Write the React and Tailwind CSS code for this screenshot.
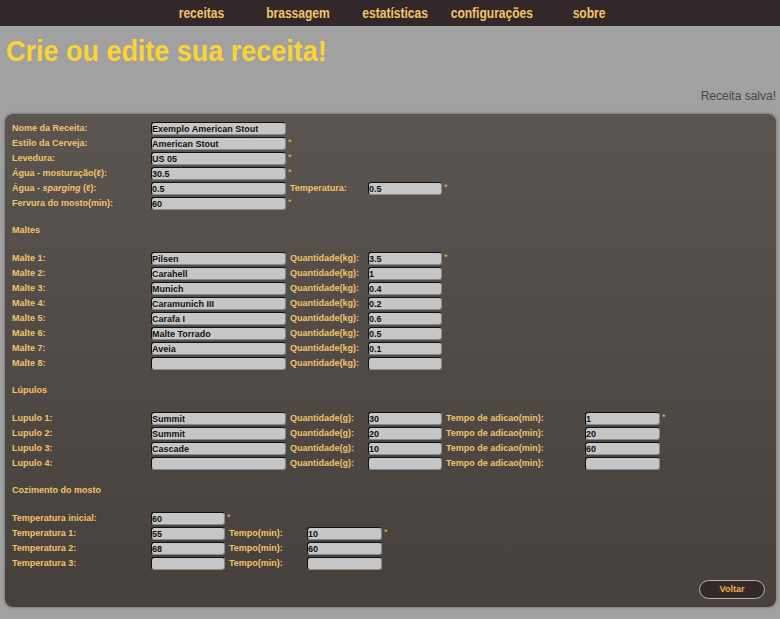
const navItems = ["receitas", "brassagem", "estatísticas", "configurações", "sobre"];

const geral = [
  [{ label: "Nome da Receita:", value: "Exemplo American Stout" }],
  [{ label: "Estilo da Cerveja:", value: "American Stout", star: true }],
  [{ label: "Levedura:", value: "US 05", star: true }],
  [{ label: "Água - mosturação(ℓ):", value: "30.5", star: true }],
  [
    { label: <>Água - <i>sparging</i> (ℓ):</>, value: "0.5" },
    { label: "Temperatura:", value: "0.5", star: true },
  ],
  [{ label: "Fervura do mosto(min):", value: "60", star: true }],
];

const maltes = ["Pilsen", "Carahell", "Munich", "Caramunich III", "Carafa I", "Malte Torrado", "Aveia", ""];
const qtdMaltes = ["3.5", "1", "0.4", "0.2", "0.6", "0.5", "0.1", ""];

const lupulos = [
  ["Summit", "30", "1"],
  ["Summit", "20", "20"],
  ["Cascade", "10", "60"],
  ["", "", ""],
];

const cozimento = [
  ["Temperatura inicial:", "60", null, null],
  ["Temperatura 1:", "55", "10", true],
  ["Temperatura 2:", "68", "60", false],
  ["Temperatura 3:", "", "", false],
];

function Label({ width, children }) {
  return (
    <div className="shrink-0 font-bold" style={{ width }}>
      {children}
    </div>
  );
}

function Input({ width, cell, value, star }) {
  return (
    <div className="flex shrink-0 items-start" style={{ width: cell }}>
      <div
        className="h-[13px] shrink-0 rounded-[3px] border border-t-[#111] border-l-[#111] border-r-[#8a8a8a] border-b-[#8a8a8a] bg-[#c6c6c6] text-[9px] font-bold leading-[12px] text-[#111]"
        style={{ width }}
      >
        {value}
      </div>
      {star && <span className="ml-[2px] mt-[1px] text-[9px] leading-[9px] text-[#f5b548]">*</span>}
    </div>
  );
}

function Row({ children }) {
  return <div className="flex h-[15px] items-center">{children}</div>;
}

function Heading({ children }) {
  return <div className="mt-[12px] mb-[13px] flex h-[15px] items-center font-bold">{children}</div>;
}

export default function App() {
  return (
    <div className="min-h-[619px] bg-[#a1a1a1] font-['Liberation_Sans',Arial,sans-serif]">
      <nav className="flex h-[26px] items-center justify-center bg-[#332829] pl-[10px] text-[14px] font-bold text-[#f3c36a]">
        {navItems.map((item) => (
          <div key={item} className="w-[97px] text-center">
            <span className="inline-block scale-x-[0.86]">{item}</span>
          </div>
        ))}
      </nav>

      <div className="flex h-[52px] items-center pl-[6px]">
        <h1 className="inline-block origin-left scale-x-[0.93] text-[29px] font-bold whitespace-nowrap text-[#fbd434]">
          Crie ou edite sua receita!
        </h1>
      </div>
      <div className="flex h-[36px] items-center justify-end pr-[4px] text-[12px] text-[#474747]">
        Receita salva!
      </div>

      <div className="mx-[5px] mr-[4px] rounded-[8px] bg-gradient-to-b from-[#5a5551] to-[#45403c] px-[7px] pt-[7px] pb-[8px] text-[9px] text-[#f3c36b] shadow-[0_0_3px_rgba(0,0,0,0.45)]">
        {geral.map((cells, i) => (
          <Row key={i}>
            <Label width={139}>{cells[0].label}</Label>
            <Input width={135} cell={139} value={cells[0].value} star={cells[0].star} />
            {cells[1] && (
              <>
                <Label width={78}>{cells[1].label}</Label>
                <Input width={74} cell={78} value={cells[1].value} star={cells[1].star} />
              </>
            )}
          </Row>
        ))}

        <Heading>Maltes</Heading>
        {maltes.map((m, i) => (
          <Row key={i}>
            <Label width={139}>Malte {i + 1}:</Label>
            <Input width={135} cell={139} value={m} />
            <Label width={78}>Quantidade(kg):</Label>
            <Input width={74} cell={78} value={qtdMaltes[i]} star={i === 0} />
          </Row>
        ))}

        <Heading>Lúpulos</Heading>
        {lupulos.map(([nome, qtd, tempo], i) => (
          <Row key={i}>
            <Label width={139}>Lupulo {i + 1}:</Label>
            <Input width={135} cell={139} value={nome} />
            <Label width={78}>Quantidade(g):</Label>
            <Input width={74} cell={78} value={qtd} />
            <Label width={139}>Tempo de adicao(min):</Label>
            <Input width={75} cell={80} value={tempo} star={i === 0} />
          </Row>
        ))}

        <Heading>Cozimento do mosto</Heading>
        {cozimento.map(([label, temp, tempo, star], i) => (
          <Row key={i}>
            <Label width={139}>{label}</Label>
            <Input width={74} cell={78} value={temp} star={i === 0} />
            {tempo !== null && (
              <>
                <Label width={78}>Tempo(min):</Label>
                <Input width={75} cell={80} value={tempo} star={star} />
              </>
            )}
          </Row>
        ))}

        <div className="mt-[9px] flex justify-end pr-[4px]">
          <button className="h-[19px] w-[66px] rounded-full border border-[#b9b2ad] bg-[#33292b] text-[9px] font-bold text-[#f3b14a]">
            Voltar
          </button>
        </div>
      </div>
    </div>
  );
}
